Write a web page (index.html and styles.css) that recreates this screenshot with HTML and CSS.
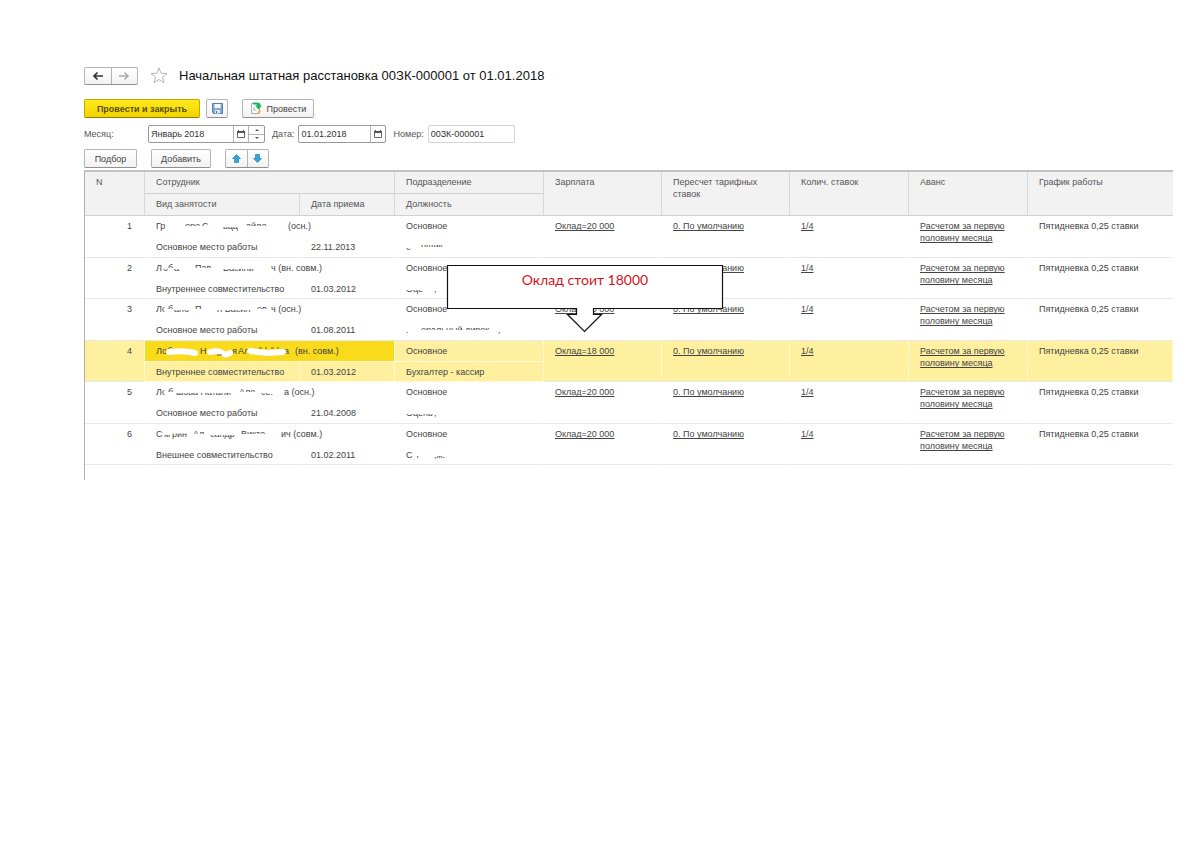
FILE: index.html
```html
<!DOCTYPE html>
<html lang="ru">
<head>
<meta charset="utf-8">
<title>Начальная штатная расстановка</title>
<link rel="stylesheet" href="styles.css">
</head>
<body>
<svg class="defs" aria-hidden="true">
  <defs>
    <clipPath id="upper"><rect x="0" y="0" width="250" height="6"/></clipPath>
    <clipPath id="lower"><rect x="0" y="7" width="250" height="6"/></clipPath>
    <symbol id="calendar" viewBox="0 0 8 8">
      <path d="M.5 1.5h7v6h-7z" fill="#fff" stroke="#666"/>
      <path d="M0 1h8v2H0zM1 0h1v1H1zM6 0h1v1H6z" fill="#555"/>
    </symbol>
  </defs>
</svg>
<main class="page">
  <header class="title-row">
    <div class="group nav">
      <button type="button" aria-label="Назад"><svg width="12" height="10" viewBox="0 0 12 10"><path d="M11 5H2M5.500 1.500 2 5l3.500 3.500" fill="none" stroke="#333" stroke-width="1.700"/></svg></button>
      <button type="button" aria-label="Вперед"><svg width="12" height="10" viewBox="0 0 12 10"><path d="M1 5h9M6.500 1.500 10 5 6.500 8.500" fill="none" stroke="#aaa" stroke-width="1.500"/></svg></button>
    </div>
    <svg class="star" width="18" height="17" viewBox="0 0 18 17"><path d="M9 1l2.100 5.300 5.900.2-4.600 3.600 1.600 5.600L9 12.500l-5 3.200 1.600-5.600L1 6.500l5.900-.2z" fill="#fff" stroke="#b5b5b5"/></svg>
    <h1>Начальная штатная расстановка 00ЗК-000001 от 01.01.2018</h1>
  </header>

  <div class="commands">
    <button type="button" class="btn primary">Провести и закрыть</button>
    <button type="button" class="btn save" aria-label="Записать"><svg width="11" height="11" viewBox="0 0 11 11"><path d="M.5.5h10v10h-9l-1-1z" fill="#86a9cf" stroke="#557cab"/><path d="M2.500 1h6v4h-6z" fill="#f4f8fc"/><path d="M3 7h5v3.500H3z" fill="#dce7f2"/><path d="M4 8h1v2H4z" fill="#4a6f9d"/></svg></button>
    <button type="button" class="btn post"><svg width="12" height="13" viewBox="0 0 12 13"><path d="M1.500 1.500h8v10h-8z" fill="#fff" stroke="#a5adb5"/><path d="M3 6h2M3 8h3" stroke="#9bb0c5"/><path d="M3 .5h4c2.500 0 3.500 1 3.500 3H12L8.500 7.500 5 3.500h2c0-.7-.5-1-1.500-1H3z" fill="#1eb45a"/><path d="M7 12l1-3 2-1 1 1-1 2z" fill="#efb64a"/></svg>Провести</button>
  </div>

  <div class="fields">
    <label for="month" class="month-label">Месяц:</label>
    <div class="group field month">
      <input id="month" type="text" value="Январь 2018">
      <button type="button" aria-label="Выбрать месяц"><svg width="8" height="8"><use href="#calendar"/></svg></button>
      <div class="spin">
        <button type="button" aria-label="Больше"><svg width="4" height="2" viewBox="0 0 4 2"><path d="M0 2l2-2 2 2z" fill="#555"/></svg></button>
        <button type="button" aria-label="Меньше"><svg width="4" height="2" viewBox="0 0 4 2"><path d="M0 0l2 2 2-2z" fill="#555"/></svg></button>
      </div>
    </div>
    <label for="date">Дата:</label>
    <div class="group field date">
      <input id="date" type="text" value="01.01.2018">
      <button type="button" aria-label="Выбрать дату"><svg width="8" height="8"><use href="#calendar"/></svg></button>
    </div>
    <label for="number">Номер:</label>
    <div class="group field number"><input id="number" type="text" value="00ЗК-000001"></div>
  </div>

  <div class="commands list-commands">
    <button type="button" class="btn pick">Подбор</button>
    <button type="button" class="btn add">Добавить</button>
    <div class="group move">
      <button type="button" aria-label="Вверх"><svg width="9" height="9" viewBox="0 0 9 9"><path d="M4.500.5l4 4H6.500v4h-4v-4h-2z" fill="#38a3d8" stroke="#2384b8" stroke-width=".7"/></svg></button>
      <button type="button" aria-label="Вниз"><svg width="9" height="9" viewBox="0 0 9 9"><path d="M4.500 8.500l4-4H6.500v-4h-4v4h-2z" fill="#38a3d8" stroke="#2384b8" stroke-width=".7"/></svg></button>
    </div>
  </div>

  <section class="grid">
    <table>
      <colgroup><col class="c-n"><col class="c-kind"><col class="c-date"><col class="c-dept"><col class="c-pay"><col class="c-rate"><col class="c-count"><col class="c-count"><col></colgroup>
      <thead>
        <tr><th rowspan="2">N</th><th colspan="2">Сотрудник</th><th>Подразделение</th><th rowspan="2">Зарплата</th><th rowspan="2">Пересчет тарифных ставок</th><th rowspan="2">Колич. ставок</th><th rowspan="2">Аванс</th><th rowspan="2">График работы</th></tr>
        <tr><th>Вид занятости</th><th>Дата приема</th><th>Должность</th></tr>
      </thead>
      <tbody>
        <tr>
          <td rowspan="2" class="num">1</td>
          <td colspan="2"><svg class="line" viewBox="0 0 236 12"><text x="0" y="9">Гр</text><g clip-path="url(#upper)"><text x="29" y="9">оро</text><text x="46" y="9">С</text><text x="90" y="9">айло</text></g><g clip-path="url(#lower)"><text x="67" y="9">ьцц</text></g><path class="wipe" d="M12 3v9"/><text x="132" y="9">(осн.)</text></svg></td>
          <td>Основное</td><td rowspan="2"><a href="#">Оклад=20 000</a></td><td rowspan="2"><a href="#">0. По умолчанию</a></td><td rowspan="2"><a href="#">1/4</a></td><td rowspan="2"><a href="#">Расчетом за первую половину месяца</a></td><td rowspan="2">Пятидневка 0,25 ставки</td>
        </tr>
        <tr><td>Основное место работы</td><td>22.11.2013</td><td><svg class="line short" viewBox="0 0 130 12"><g clip-path="url(#lower)"><text x="0" y="9">с</text></g><g clip-path="url(#upper)"><text x="15" y="9">нщик</text></g></svg></td></tr>
        <tr>
          <td rowspan="2" class="num">2</td>
          <td colspan="2"><svg class="line" viewBox="0 0 236 12"><text x="0" y="9">Л</text><g clip-path="url(#lower)"><text x="7" y="9">о</text><text x="18" y="9">а</text><text x="67" y="9">Васили</text></g><g clip-path="url(#upper)"><text x="12" y="9">б</text><text x="39" y="9">Пав</text></g><text x="115" y="9">ч (вн. совм.)</text></svg></td>
          <td>Основное</td><td rowspan="2"><a href="#">Оклад=20 000</a></td><td rowspan="2"><a href="#">0. По умолчанию</a></td><td rowspan="2"><a href="#">1/4</a></td><td rowspan="2"><a href="#">Расчетом за первую половину месяца</a></td><td rowspan="2">Пятидневка 0,25 ставки</td>
        </tr>
        <tr><td>Внутреннее совместительство</td><td>01.03.2012</td><td><svg class="line short" viewBox="0 0 130 12"><g clip-path="url(#lower)"><text x="0" y="9">Оце</text><text x="28" y="9">,</text></g></svg></td></tr>
        <tr>
          <td rowspan="2" class="num">3</td>
          <td colspan="2"><svg class="line" viewBox="0 0 236 12"><text x="0" y="9">Ло</text><path class="wipe" d="M11 3v9"/><g clip-path="url(#lower)"><text x="18" y="9">ано</text><text x="61" y="9">л Васил</text></g><g clip-path="url(#upper)"><text x="12" y="9">б</text><text x="39" y="9">П</text><text x="101" y="9">ев</text></g><text x="115" y="9">ч (осн.)</text></svg></td>
          <td>Основное</td><td rowspan="2"><a href="#">Оклад=20 000</a></td><td rowspan="2"><a href="#">0. По умолчанию</a></td><td rowspan="2"><a href="#">1/4</a></td><td rowspan="2"><a href="#">Расчетом за первую половину месяца</a></td><td rowspan="2">Пятидневка 0,25 ставки</td>
        </tr>
        <tr><td>Основное место работы</td><td>01.08.2011</td><td><svg class="line short" viewBox="0 0 130 12"><g clip-path="url(#upper)"><text x="15" y="9">еральный дирек</text></g><g clip-path="url(#lower)"><text x="0" y="9">.</text><text x="92" y="9">,</text></g></svg></td></tr>
        <tr class="selected">
          <td rowspan="2" class="num">4</td>
          <td colspan="2" class="current"><svg class="line" viewBox="0 0 236 12"><text x="0" y="9">Лоб</text><text x="44" y="9">Н</text><text x="76" y="9">я</text><text x="82" y="9">Ал</text><text x="128" y="9">а</text><text x="139" y="9">(вн. совм.)</text><path class="blob" d="M13 7q14-2 26 1M54 7q9-2 12 1t8 0M94 6l17 2q14-1 16-1"/><path d="M103 3h3M109 3h2M115 3h3M121 3h2M61 10h5" stroke="#6b6020"/></svg></td>
          <td>Основное</td><td rowspan="2"><a href="#">Оклад=18 000</a></td><td rowspan="2"><a href="#">0. По умолчанию</a></td><td rowspan="2"><a href="#">1/4</a></td><td rowspan="2"><a href="#">Расчетом за первую половину месяца</a></td><td rowspan="2">Пятидневка 0,25 ставки</td>
        </tr>
        <tr class="selected"><td>Внутреннее совместительство</td><td>01.03.2012</td><td>Бухгалтер - кассир</td></tr>
        <tr>
          <td rowspan="2" class="num">5</td>
          <td colspan="2"><svg class="line" viewBox="0 0 236 12"><text x="0" y="9">Ло</text><path class="wipe" d="M11 3v9"/><g clip-path="url(#lower)"><text x="20" y="9">шова Натали</text><text x="105" y="9">се.</text></g><g clip-path="url(#upper)"><text x="12" y="9">б</text><text x="83" y="9">Але</text></g><text x="128" y="9">а (осн.)</text></svg></td>
          <td>Основное</td><td rowspan="2"><a href="#">Оклад=20 000</a></td><td rowspan="2"><a href="#">0. По умолчанию</a></td><td rowspan="2"><a href="#">1/4</a></td><td rowspan="2"><a href="#">Расчетом за первую половину месяца</a></td><td rowspan="2">Пятидневка 0,25 ставки</td>
        </tr>
        <tr><td>Основное место работы</td><td>21.04.2008</td><td><svg class="line short" viewBox="0 0 130 12"><g clip-path="url(#lower)"><text x="0" y="9">Оцень</text><text x="28" y="9">,</text></g></svg></td></tr>
        <tr>
          <td rowspan="2" class="num">6</td>
          <td colspan="2"><svg class="line" viewBox="0 0 236 12"><text x="0" y="9">С</text><g clip-path="url(#lower)"><text x="8" y="9">м</text><text x="54" y="9">сандр</text></g><text x="16" y="9">рин</text><path class="wipe" d="M14 3h20"/><g clip-path="url(#upper)"><text x="37" y="9">Ал</text><text x="85" y="9">Викто</text></g><text x="125" y="9">ич (совм.)</text></svg></td>
          <td>Основное</td><td rowspan="2"><a href="#">Оклад=20 000</a></td><td rowspan="2"><a href="#">0. По умолчанию</a></td><td rowspan="2"><a href="#">1/4</a></td><td rowspan="2"><a href="#">Расчетом за первую половину месяца</a></td><td rowspan="2">Пятидневка 0,25 ставки</td>
        </tr>
        <tr><td>Внешнее совместительство</td><td>01.02.2011</td><td><svg class="line short" viewBox="0 0 130 12"><text x="0" y="9">С</text><g clip-path="url(#lower)"><text x="8" y="9">ч</text><text x="28" y="9">,ж.</text></g></svg></td></tr>
      </tbody>
    </table>
    <div class="callout">
      <svg width="278" height="70" viewBox="0 0 278 70" aria-hidden="true"><path d="M1.500 2.500h275v43H147.500v6h8l-17 17-17-17h9v-6H1.500z" fill="#fff" stroke="#111" stroke-width="1.200"/></svg>
      <p>Оклад стоит 18000</p>
    </div>
  </section>
</main>
</body>
</html>
```
FILE: styles.css
```css
* { box-sizing: border-box; }
body {
  margin: 0;
  background: #fff;
  color: #444;
  font: 9px/12px "Liberation Sans", Arial, sans-serif;
}
.defs { position: absolute; width: 0; height: 0; }
.page { padding: 66px 27px 40px 84px; }
button, input { font: inherit; color: inherit; margin: 0; }
button {
  display: flex;
  align-items: center;
  justify-content: center;
  padding: 0;
  border: 0;
  background: transparent;
}

.title-row { display: flex; align-items: center; height: 19px; }
h1 { margin: 0 0 0 11px; font-size: 13px; line-height: 18px; font-weight: 400; color: #111; white-space: nowrap; }
.star { margin-left: 12px; }

.group {
  display: flex;
  border: 1px solid #b4b4b4;
  border-radius: 2px;
  background: #fff;
}
.group > * + * { border-left: 1px solid #b4b4b4; }
.nav, .move { border-bottom-color: #8f8f8f; background: linear-gradient(#fff, #f2f2f2); }
.nav { width: 54px; height: 18px; }
.nav button, .move button { flex: 1; }

.commands { display: flex; height: 19px; margin-top: 14px; }
.btn {
  height: 19px;
  border: 1px solid #b4b4b4;
  border-bottom-color: #8f8f8f;
  border-radius: 2px;
  background: linear-gradient(#fff, #f2f2f2);
}
.primary {
  width: 116px;
  border-color: #c4a800;
  border-bottom-color: #927d00;
  background: linear-gradient(#ffe91c, #f2d400);
  color: #5c5000;
  font-weight: 700;
}
.save { width: 22px; margin-left: 6px; }
.post { width: 72px; margin-left: 14px; gap: 5px; }

.fields { display: flex; align-items: center; height: 18px; margin-top: 7px; color: #555; }
.month-label { width: 64px; }
.field { height: 18px; border-color: #999; color: #333; }
.field + label { margin: 0 4px 0 7px; }
.field input { flex: 1; min-width: 0; padding: 0 2px; border: 0; background: transparent; }
.field > button { width: 15px; }
.month { width: 117px; }
.date { width: 88px; }
.number { width: 87px; border-color: #d4d4d4; }
.spin { display: flex; flex-direction: column; width: 16px; }
.spin button { flex: 1; }
.spin button + button { border-top: 1px solid #b4b4b4; }

.list-commands { margin-top: 6px; }
.pick { width: 53px; }
.add { width: 60px; margin-left: 14px; }
.move { width: 44px; margin-left: 14px; }

.grid { position: relative; margin-top: 2px; padding-bottom: 15px; border-top: 2px solid #c2c2c2; border-left: 1px solid #b0b0b0; }
table { width: 100%; table-layout: fixed; border-collapse: separate; border-spacing: 0; }
.c-n { width: 60px; }
.c-kind { width: 155px; }
.c-date { width: 95px; }
.c-dept { width: 149px; }
.c-pay { width: 118px; }
.c-rate { width: 128px; }
.c-count { width: 119px; }
th, td { padding: 4px 8px 0 11px; vertical-align: top; text-align: left; font-weight: 400; }
th { height: 22px; background: #f2f2f2; color: #555; border-right: 1px solid #d9d9d9; border-bottom: 1px solid #d0d0d0; }
th:last-child { border-right: 0; }
thead tr + tr th:last-child { border-right: 1px solid #d9d9d9; }
tbody tr { height: 21px; }
tbody tr:nth-child(4n) { height: 20px; }
td { white-space: nowrap; border-right: 1px solid transparent; }
td[rowspan] { white-space: normal; }
tbody tr:nth-child(even) td, td[rowspan] { border-bottom: 1px solid #e8e8e8; }
.num { padding-right: 12px; text-align: right; }
a { color: inherit; text-decoration: underline; text-decoration-skip-ink: none; }

.selected td { background: #fff0a0; border-right: 1px solid #fff8d0; }
.selected td:not([rowspan]) { border-bottom: 1px solid #fff8d0; }
.selected .current { background: #f9db1c; }

.line { display: block; width: 236px; height: 12px; overflow: visible; font-size: 9px; fill: #444; }
.short { width: 130px; }
.wipe { fill: none; stroke: #fff; stroke-width: 5; }
.blob { fill: none; stroke: #fff; stroke-width: 6; stroke-linecap: round; }

.callout { position: absolute; left: 361px; top: 91px; width: 278px; }
.callout svg { display: block; }
.callout p {
  position: absolute;
  inset: 7px 0 auto;
  margin: 0;
  text-align: center;
  font: 14px/20px Lato, "Open Sans", sans-serif;
  color: #d9101c;
}
```
